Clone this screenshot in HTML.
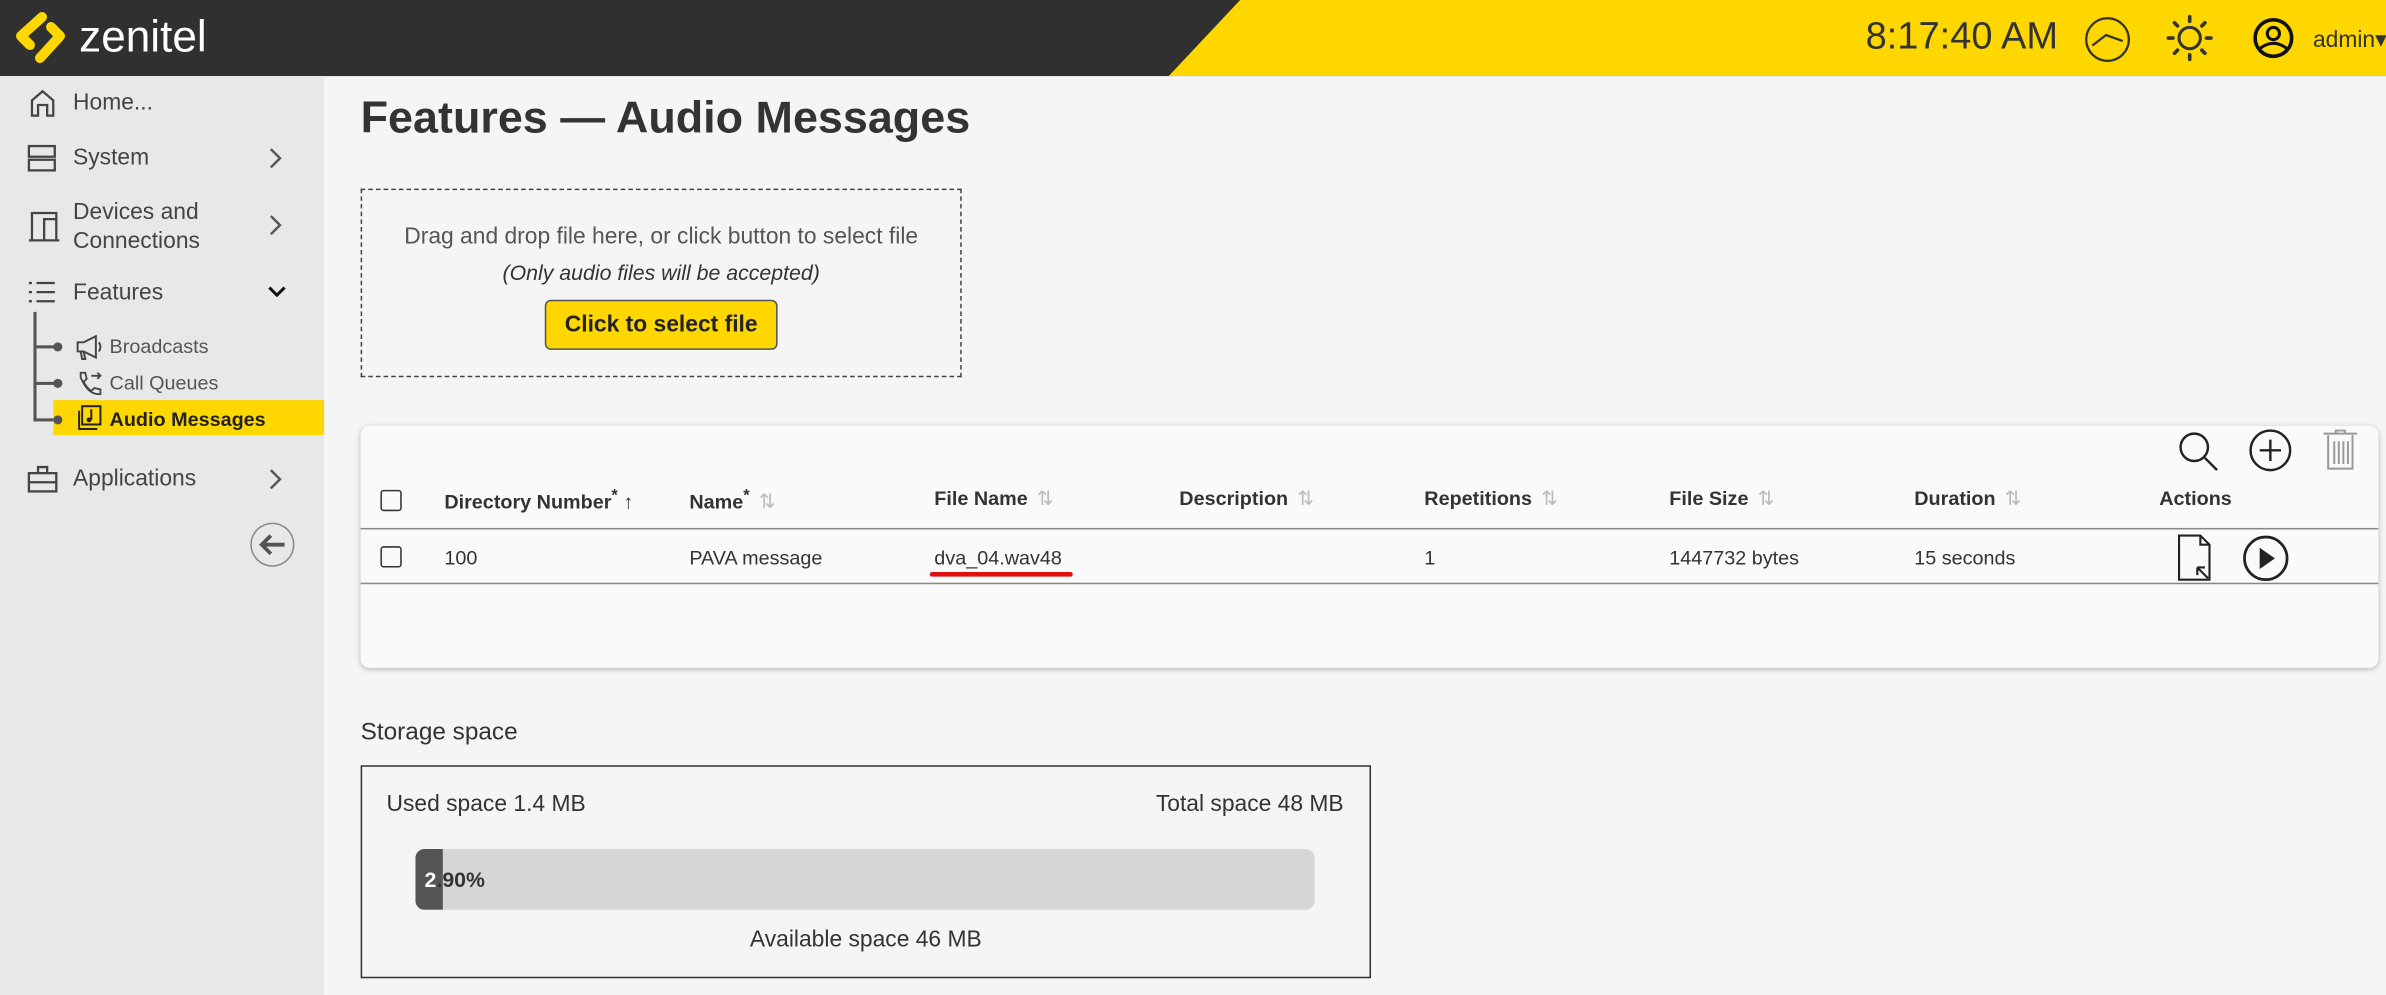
<!DOCTYPE html>
<html><head><meta charset="utf-8"><style>
*{box-sizing:border-box;margin:0;padding:0}
html,body{width:2386px;height:995px;overflow:hidden;background:#f5f5f5}
#w{width:1568px;height:654px;transform:scale(1.52168,1.5214);transform-origin:0 0;position:relative;font-family:"Liberation Sans",sans-serif;color:#333}
.a{position:absolute;white-space:nowrap}
.sb{font-size:15px;color:#444}
.th{font-size:13px;font-weight:bold;color:#333;top:320px}
.td{font-size:13px;color:#333;top:359px}
.srt{color:#bbb;font-weight:normal;margin-left:6px}
.cb{position:absolute;width:14px;height:14px;border:1.6px solid #333;border-radius:2px;left:250px}
</style></head><body><div id="w">
<div class="a" style="left:0;top:0;width:1568px;height:50px;background:#303030"></div>
<svg class="a" style="left:0;top:0" width="1568" height="50"><polygon points="815,0 1568,0 1568,50 768,50" fill="#ffd700"/></svg>
<svg class="a" style="left:0;top:0" width="52.6" height="50" viewBox="0 0 80 76"><g fill="none" stroke="#ffd700" stroke-width="10" stroke-linejoin="round" stroke-linecap="round"><path d="M42 17 L21 36 L30 45"/><path d="M40 58 L60 36 L51 27"/></g></svg>
<div class="a" style="left:52px;top:9px;font-size:29px;color:#fff">zenitel</div>
<div class="a" style="left:1226px;top:10px;font-size:25px;color:#333">8:17:40 AM</div>
<svg class="a" style="left:1368px;top:10px" width="34" height="32"><circle cx="17" cy="16" r="14" fill="none" stroke="#333" stroke-width="1.5"/><path d="M7 20 L16 13 L27 17" fill="none" stroke="#333" stroke-width="1.5"/></svg>
<svg class="a" style="left:1423px;top:9px" width="32" height="32" viewBox="0 0 32 32"><circle cx="16" cy="16" r="7" fill="none" stroke="#333" stroke-width="2"/><g stroke="#333" stroke-width="2.4" stroke-linecap="round"><path d="M16 2v3M16 27v3M2 16h3M27 16h3M6 6l2 2M24 24l2 2M26 6l-2 2M8 24l-2 2"/></g></svg>
<svg class="a" style="left:1480px;top:11px" width="28" height="28"><circle cx="14" cy="14" r="12" fill="none" stroke="#111" stroke-width="2.4"/><circle cx="14" cy="11" r="4" fill="none" stroke="#111" stroke-width="2"/><path d="M5 21 Q14 14 23 21" fill="none" stroke="#111" stroke-width="2"/></svg>
<div class="a" style="left:1520px;top:17px;font-size:15px;color:#333">admin▾</div>

<div class="a" style="left:0;top:50px;width:213px;height:604px;background:#e8e8e8"></div>
<svg class="a" style="left:18px;top:58px" width="20" height="20"><path d="M3 18V8l7-6 7 6v10h-4v-7H7v7z" fill="none" stroke="#444" stroke-width="1.5"/></svg>
<div class="a sb" style="left:48px;top:59px">Home...</div>
<svg class="a" style="left:18px;top:94px" width="20" height="20"><rect x="1" y="2" width="17" height="7" fill="none" stroke="#444" stroke-width="1.5"/><rect x="1" y="11" width="17" height="7" fill="none" stroke="#444" stroke-width="1.5"/></svg>
<div class="a sb" style="left:48px;top:95px">System</div>
<svg class="a" style="left:175px;top:96px" width="12" height="16"><path d="M3 2l6 6-6 6" fill="none" stroke="#555" stroke-width="1.6"/></svg>
<svg class="a" style="left:18px;top:138px" width="22" height="22"><path d="M1 20h20M3 20V2h16v4M11 6h8v14h-8z" fill="none" stroke="#444" stroke-width="1.5"/></svg>
<div class="a sb" style="left:48px;top:130px;line-height:19px">Devices and<br>Connections</div>
<svg class="a" style="left:175px;top:140px" width="12" height="16"><path d="M3 2l6 6-6 6" fill="none" stroke="#555" stroke-width="1.6"/></svg>
<svg class="a" style="left:18px;top:183px" width="20" height="20"><g stroke="#444" stroke-width="1.5"><path d="M6 3h12M6 9h12M6 15h12M1 3h2M1 9h2M1 15h2"/></g></svg>
<div class="a sb" style="left:48px;top:184px">Features</div>
<svg class="a" style="left:175px;top:186px" width="14" height="12"><path d="M2 3l5 5 5-5" fill="none" stroke="#111" stroke-width="2"/></svg>
<div class="a" style="left:22px;top:205px;width:2px;height:72px;background:#555"></div>
<div class="a" style="left:22px;top:227px;width:15px;height:2px;background:#555"></div>
<div class="a" style="left:22px;top:251px;width:15px;height:2px;background:#555"></div>
<div class="a" style="left:22px;top:275px;width:15px;height:2px;background:#555"></div>
<div class="a" style="left:35px;top:263px;width:178px;height:23px;background:#ffd700"></div>
<div class="a" style="left:35px;top:225px;width:6px;height:6px;border-radius:3px;background:#555"></div>
<div class="a" style="left:35px;top:249px;width:6px;height:6px;border-radius:3px;background:#555"></div>
<div class="a" style="left:35px;top:273px;width:6px;height:6px;border-radius:3px;background:#555"></div>
<svg class="a" style="left:49px;top:219px" width="20" height="18"><path d="M2 6h4l8-4v14l-8-4H2z M4 12l1 5h2l-1-5 M16 6q2 3 0 6" fill="none" stroke="#444" stroke-width="1.3"/></svg>
<div class="a" style="left:72px;top:220px;font-size:13px;color:#555">Broadcasts</div>
<svg class="a" style="left:50px;top:243px" width="18" height="18"><path d="M3 2l3 0 1 4-2 2q2 4 5 6l2-2 4 1v3q-8 1-13-11z" fill="none" stroke="#444" stroke-width="1.2"/><path d="M10 4h6M14 2l2 2-2 2" fill="none" stroke="#444" stroke-width="1.2"/></svg>
<div class="a" style="left:72px;top:244px;font-size:13px;color:#555">Call Queues</div>
<svg class="a" style="left:51px;top:266px" width="16" height="17"><rect x="3" y="1" width="12" height="12" fill="none" stroke="#222" stroke-width="1.3"/><path d="M1 4v12h12" fill="none" stroke="#222" stroke-width="1.3"/><path d="M9 3v7" stroke="#222" stroke-width="1.3"/><circle cx="7.5" cy="10" r="1.6" fill="#222"/></svg>
<div class="a" style="left:72px;top:268px;font-size:13px;font-weight:bold;color:#222">Audio Messages</div>
<svg class="a" style="left:18px;top:305px" width="20" height="20"><rect x="1" y="6" width="18" height="12" fill="none" stroke="#444" stroke-width="1.5"/><path d="M7 6V2h6v4M1 12h18" fill="none" stroke="#444" stroke-width="1.5"/></svg>
<div class="a sb" style="left:48px;top:306px">Applications</div>
<svg class="a" style="left:175px;top:307px" width="12" height="16"><path d="M3 2l6 6-6 6" fill="none" stroke="#555" stroke-width="1.6"/></svg>
<svg class="a" style="left:164px;top:343px" width="30" height="30"><circle cx="15" cy="15" r="14" fill="none" stroke="#888" stroke-width="1"/><path d="M23 15H8M14 9l-6 6 6 6" fill="none" stroke="#555" stroke-width="2.5"/></svg>

<div class="a" style="left:237px;top:61px;font-size:29.5px;font-weight:bold;color:#333">Features — Audio Messages</div>
<div class="a" style="left:237px;top:124px;width:395px;height:124px;border:1px dashed #444"></div>
<div class="a" style="left:237px;top:147px;width:395px;text-align:center;font-size:15px;color:#555">Drag and drop file here, or click button to select file</div>
<div class="a" style="left:237px;top:171px;width:395px;text-align:center;font-size:14px;font-style:italic;color:#333">(Only audio files will be accepted)</div>
<div class="a" style="left:358px;top:197px;width:153px;height:33px;background:#ffd700;border:1px solid #555;border-radius:4px;text-align:center;line-height:31px;font-size:15px;font-weight:bold;color:#222">Click to select file</div>

<div class="a" style="left:237px;top:280px;width:1326px;height:159px;background:#fafafa;border-radius:6px;box-shadow:0 1px 4px rgba(0,0,0,.25)"></div>
<svg class="a" style="left:1428px;top:281px" width="36" height="30"><circle cx="14" cy="13" r="9" fill="none" stroke="#222" stroke-width="1.6"/><path d="M21 20l8 8" stroke="#222" stroke-width="1.6"/></svg>
<svg class="a" style="left:1476px;top:281px" width="32" height="32"><circle cx="16" cy="15" r="13" fill="none" stroke="#222" stroke-width="1.6"/><path d="M16 8v14M9 15h14" stroke="#222" stroke-width="1.6"/></svg>
<svg class="a" style="left:1524px;top:281px" width="32" height="32"><path d="M3 4h22M11 4V2h6v2M6 5v22h16V5M10 9v15M13 9v15M16 9v15M19 9v15" fill="none" stroke="#999" stroke-width="1.3"/></svg>
<div class="cb" style="top:322px"></div>
<div class="a th" style="left:292px">Directory Number<sup>*</sup> <span style="font-weight:normal">↑</span></div>
<div class="a th" style="left:453px">Name<sup>*</sup><span class="srt">⇅</span></div>
<div class="a th" style="left:614px">File Name<span class="srt">⇅</span></div>
<div class="a th" style="left:775px">Description<span class="srt">⇅</span></div>
<div class="a th" style="left:936px">Repetitions<span class="srt">⇅</span></div>
<div class="a th" style="left:1097px">File Size<span class="srt">⇅</span></div>
<div class="a th" style="left:1258px">Duration<span class="srt">⇅</span></div>
<div class="a th" style="left:1419px">Actions</div>
<div class="a" style="left:237px;top:347px;width:1326px;height:1px;background:#888"></div>
<div class="cb" style="top:359px"></div>
<div class="a td" style="left:292px">100</div>
<div class="a td" style="left:453px">PAVA message</div>
<div class="a td" style="left:614px">dva_04.wav48</div>
<div class="a" style="left:611px;top:376px;width:94px;height:3px;border-radius:2px;background:#e01010"></div>
<div class="a td" style="left:936px">1</div>
<div class="a td" style="left:1097px">1447732 bytes</div>
<div class="a td" style="left:1258px">15 seconds</div>
<svg class="a" style="left:1430px;top:350px" width="26" height="33"><path d="M2 2h14l6 6v23H2z M16 2v6h6" fill="none" stroke="#222" stroke-width="1.4"/><path d="M14 23l7 7M14 23h5M14 23v5" stroke="#222" stroke-width="1.4" fill="none"/></svg>
<svg class="a" style="left:1473px;top:351px" width="32" height="32"><circle cx="16" cy="16" r="14" fill="none" stroke="#222" stroke-width="1.8"/><path d="M12 9l10 7-10 7z" fill="#222"/></svg>
<div class="a" style="left:237px;top:383px;width:1326px;height:1px;background:#888"></div>

<div class="a" style="left:237px;top:473px;font-size:16px;color:#333">Storage space</div>
<div class="a" style="left:237px;top:503px;width:664px;height:140px;border:1px solid #333"></div>
<div class="a" style="left:254px;top:520px;font-size:15px;color:#333">Used space 1.4 MB</div>
<div class="a" style="left:600px;top:520px;width:283px;text-align:right;font-size:15px;color:#333">Total space 48 MB</div>
<div class="a" style="left:273px;top:558px;width:591px;height:40px;background:#d6d6d6;border-radius:6px;overflow:hidden"><div style="width:18px;height:40px;background:#555"></div></div>
<div class="a" style="left:279px;top:570px;font-size:14px;font-weight:bold;color:#333"><span style="color:#fff">2</span>.90%</div>
<div class="a" style="left:237px;top:609px;width:664px;text-align:center;font-size:15px;color:#333">Available space 46 MB</div>
</div></body></html>
